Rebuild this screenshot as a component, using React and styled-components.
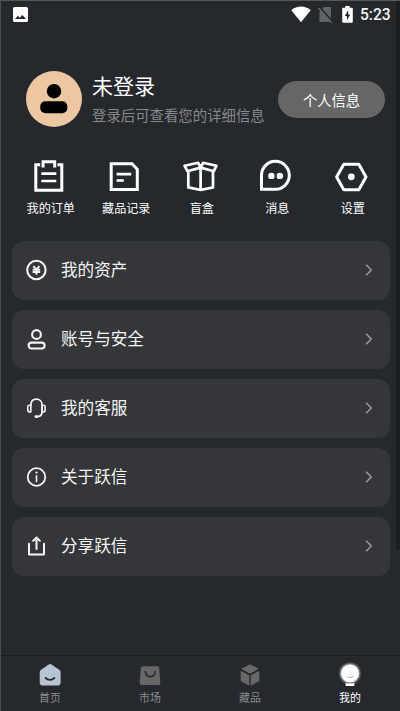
import React from 'react';
import styled, { createGlobalStyle } from 'styled-components';

const GlobalStyle = createGlobalStyle`
    * {
        box-sizing: border-box;
    }
    body {
        margin: 0;
        background: #25282d;
        font-family: Roboto, "Noto Sans CJK SC", sans-serif;
    }
    svg {
        display: block;
        flex: none;
        overflow: visible;
    }
`;

const Screen = styled.div`
    position: relative;
    display: flex;
    flex-direction: column;
    width: 400px;
    height: 711px;
    overflow: hidden;
    background: #25282d;
    border-top: 1px solid #53585c;
    border-left: 1px solid #4a4e52;
`;

const ScrollTrack = styled.div`
    position: absolute;
    top: 0;
    right: 0;
    width: 4px;
    height: 549px;
    background: #1d1e21;
`;

const StatusBar = styled.header`
    display: flex;
    align-items: center;
    height: 27px;
    padding: 0 9px 0 12px;
`;

const StatusIcons = styled.div`
    display: flex;
    align-items: center;
    margin-left: auto;
`;

const WifiIcon = styled.svg`
    width: 20px;
    height: 17px;
`;

const SimIcon = styled.svg`
    width: 15px;
    height: 17px;
    margin-left: 7px;
`;

const BatteryIcon = styled.svg`
    width: 11px;
    height: 17px;
    margin-left: 9px;
`;

const Clock = styled.span`
    width: 31px;
    margin-left: 7px;
    color: #f4f4f4;
    font-size: 15.6px;
    font-weight: 500;
    line-height: 20px;
    white-space: nowrap;
`;

const Profile = styled.section`
    display: flex;
    align-items: center;
    height: 56px;
    margin-top: 43px;
    padding: 0 15px 0 25px;
`;

const Avatar = styled.div`
    width: 56px;
    height: 56px;
    border-radius: 50%;
    background: #edc7a1;
`;

const ProfileText = styled.div`
    flex: 1;
    margin-left: 10px;
    white-space: nowrap;
`;

const UserName = styled.div`
    color: #fff;
    font-size: 21px;
    line-height: 30px;
`;

const UserHint = styled.div`
    color: #86888a;
    font-size: 14.4px;
    line-height: 20px;
    padding-top: 5px;
`;

const InfoButton = styled.button`
    width: 107px;
    height: 37px;
    padding: 0;
    border: 0;
    border-radius: 19px;
    background: #666;
    color: #fff;
    font-family: inherit;
    font-size: 14.3px;
`;

const Shortcuts = styled.nav`
    display: grid;
    grid-template-columns: repeat(5, 75.5px);
    margin-top: 31px;
    padding-left: 12px;
`;

const Shortcut = styled.div`
    display: flex;
    flex-direction: column;
    align-items: center;
    color: #fff;
    font-size: 12.1px;
    line-height: 18px;
    gap: 6px;
`;

const Menu = styled.main`
    display: flex;
    flex-direction: column;
    gap: 10px;
    margin-top: 23px;
    padding: 0 10px 0 11px;
`;

const MenuRow = styled.div`
    display: flex;
    align-items: center;
    height: 59px;
    padding: 0 16px 0 12px;
    border-radius: 12px;
    background: #35363a;
    color: #f6f6f6;
`;

const MenuLabel = styled.span`
    flex: 1;
    margin-left: 12px;
    padding-top: 1px;
    font-size: 16.6px;
    line-height: 24px;
`;

const Chevron = styled.svg`
    width: 10px;
    height: 12px;
    margin-bottom: 2px;
`;

const TabBar = styled.footer`
    display: grid;
    grid-template-columns: repeat(4, 100px);
    height: 56px;
    margin-top: auto;
    margin-left: -1px;
    padding-top: 5px;
    border-top: 1px solid #1b1d21;
`;

const Tab = styled.div`
    display: flex;
    flex-direction: column;
    align-items: center;
    color: ${(props) => (props.$active ? '#fff' : '#8b8c8e')};
    font-size: 10.9px;
    line-height: 16px;
    gap: 2px;
`;

const BigIcon = ({ children }) => (
    <svg width="36" height="36" viewBox="0 0 36 36" fill="none" stroke="#fff" strokeWidth="3">
        {children}
    </svg>
);

const RowIcon = ({ children }) => (
    <svg width="25" height="25" viewBox="0 0 25 25" fill="none" stroke="#f4f4f4" strokeWidth="1.8" strokeLinecap="round" strokeLinejoin="round">
        {children}
    </svg>
);

const TabIcon = ({ children }) => (
    <svg width="30" height="28" viewBox="0 0 30 28" fill="none">
        {children}
    </svg>
);

const shortcuts = [
    {
        label: '我的订单',
        icon: (
            <BigIcon>
                <path d="M7.2 6.7H2.8v25.5h26V6.7h-4.4" />
                <path d="M10.1 9.6V3.8h11.6v5.8" />
                <path d="M8.3 15.7h15M8.3 23h15" strokeWidth="2.7" />
            </BigIcon>
        ),
    },
    {
        label: '藏品记录',
        icon: (
            <BigIcon>
                <path d="M3.2 5.7H24l5.3 5.6v20.2H3.2z" />
                <path d="M8.6 16.2h14.6M8.6 22.5h7.2" strokeWidth="2.7" />
            </BigIcon>
        ),
    },
    {
        label: '盲盒',
        icon: (
            <BigIcon>
                <g strokeWidth="2.7" strokeLinejoin="round">
                    <path d="M4.3 13V29.4L16.6 32 29 29.4V13M16.6 10.4V31.5" />
                    <path d="M.6 7.8 14.2 4.8 16.6 9.6 3.4 13.2zM32.4 7.8 19 4.8 16.6 9.6 29.8 13.2z" />
                </g>
            </BigIcon>
        ),
    },
    {
        label: '消息',
        icon: (
            <BigIcon>
                <path d="M2.5 31.3V17.2A13.9 14 0 1 1 16.4 31.3z" />
                <circle cx="12.4" cy="17.9" r="3.2" fill="#fff" stroke="none" />
                <circle cx="20.8" cy="17.9" r="3.2" fill="#fff" stroke="none" />
            </BigIcon>
        ),
    },
    {
        label: '设置',
        icon: (
            <BigIcon>
                <path d="M8.8 6.3H23.8L31 19 23.8 31.7H8.8L1.6 19z" strokeLinejoin="round" />
                <circle cx="16.3" cy="18.8" r="3.4" fill="#fff" stroke="none" />
            </BigIcon>
        ),
    },
];

const menu = [
    {
        label: '我的资产',
        icon: (
            <RowIcon>
                <circle cx="12.4" cy="12" r="9.2" strokeWidth="2.1" />
                <path d="M9.3 8.1 12.4 11.4 15.5 8.1M8.6 11.7h7.6M8.6 14h7.6M12.4 11.4v5.4" strokeWidth="2" strokeLinecap="butt" />
            </RowIcon>
        ),
    },
    {
        label: '账号与安全',
        icon: (
            <RowIcon>
                <circle cx="12.5" cy="7.5" r="4.4" strokeWidth="2.1" />
                <rect x="4.6" y="15.6" width="16" height="5.9" rx="2.9" strokeWidth="2.1" />
            </RowIcon>
        ),
    },
    {
        label: '我的客服',
        icon: (
            <RowIcon>
                <path d="M6.9 9.2C6.9 5.4 9.2 3.2 12.4 3.2s5.7 2.2 5.7 6v6.5c0 3-1.9 4.7-4.7 4.9" />
                <path d="M6.8 9.3v6.6H5.4a1.6 1.6 0 0 1-1.6-1.6v-3.4a1.6 1.6 0 0 1 1.6-1.6zM18.1 9.3v6.6h1.4a1.6 1.6 0 0 0 1.6-1.6v-3.4a1.6 1.6 0 0 0-1.6-1.6z" strokeWidth="1.6" />
                <path d="M11.8 20.6h1.4" strokeWidth="2.6" />
            </RowIcon>
        ),
    },
    {
        label: '关于跃信',
        icon: (
            <RowIcon>
                <circle cx="12.5" cy="12" r="8.8" strokeWidth="1.8" />
                <path d="M12.5 10.8v5.8" strokeWidth="1.6" />
                <circle cx="12.5" cy="7.6" r="1.1" fill="#f4f4f4" stroke="none" />
            </RowIcon>
        ),
    },
    {
        label: '分享跃信',
        icon: (
            <RowIcon>
                <path d="M5 9.8v10.6h15V9.8M12.5 15V3.9M9.1 6.9 12.5 3.5l3.4 3.4" strokeWidth="2" />
            </RowIcon>
        ),
    },
];

const tabs = [
    {
        label: '首页',
        icon: (
            <TabIcon>
                <path d="M13.7 3.5a2.6 2.6 0 0 1 2.8 0l7.7 5.3a3 3 0 0 1 1.4 2.4V21.5a3 3 0 0 1-3 3H7.7a3 3 0 0 1-3-3V11.2a3 3 0 0 1 1.4-2.4z" fill="#b8c4d1" />
                <path d="M10.5 16.9c2.4 2.7 6.6 2.7 9 0" stroke="#25282d" strokeWidth="1.7" strokeLinecap="round" />
            </TabIcon>
        ),
    },
    {
        label: '市场',
        icon: (
            <TabIcon>
                <path d="M7.8 5.3h14.4a2 2 0 0 1 2 1.8l1.1 14.6a2 2 0 0 1-2 2.2H6.7a2 2 0 0 1-2-2.2L5.8 7.1a2 2 0 0 1 2-1.8z" fill="#676767" />
                <path d="M10.4 10.5c.3 6.8 9.3 6.8 9.6 0" stroke="#25282d" strokeWidth="1.6" strokeLinecap="round" />
            </TabIcon>
        ),
    },
    {
        label: '藏品',
        icon: (
            <TabIcon>
                <g fill="#686868" stroke="#686868" strokeWidth="1.2" strokeLinejoin="round">
                    <path d="M15 4 22.7 7.8 15 11.9 7.3 7.8z" />
                    <path d="M6.3 10.7 13.7 14.7V23.7L6.3 19.7z" />
                    <path d="M23.7 10.7 16.3 14.7V23.7L23.7 19.7z" />
                </g>
            </TabIcon>
        ),
    },
    {
        label: '我的',
        active: true,
        icon: (
            <TabIcon>
                <defs>
                    <filter id="glow" x="-30%" y="-30%" width="160%" height="160%">
                        <feGaussianBlur stdDeviation="1.2" />
                    </filter>
                </defs>
                <circle cx="15" cy="12.4" r="10" fill="#fff" opacity=".7" filter="url(#glow)" />
                <circle cx="15" cy="12.4" r="8.9" fill="#fff" />
                <path d="M10.3 21.9h9.4l-.6 3.1h-8.2z" fill="#fff" />
                <path d="M10.4 22h9.2" stroke="#777" strokeWidth=".7" />
                <path d="M11.9 15.3c1.9 1.7 4.4 1.7 6.3 0" stroke="#aaa" strokeWidth="1" strokeLinecap="round" />
            </TabIcon>
        ),
    },
];

const App = () => {
    return (
        <>
            <GlobalStyle />
            <Screen>
                <ScrollTrack />
                <StatusBar>
                    <svg width="15" height="15" viewBox="0 0 15 15">
                        <rect width="15" height="15" rx="1.5" fill="#fff" />
                        <path d="M2 12 4.9 8.7l1.9 2L9.3 7.9 13 12z" fill="#25282d" />
                    </svg>
                    <StatusIcons>
                        <WifiIcon viewBox="0 0 20 17">
                            <path d="M.3 4.2C6-.6 14-.6 19.7 4.2L10 16.3z" fill="#fff" />
                        </WifiIcon>
                        <SimIcon viewBox="0 0 15 17">
                            <path d="M6 1h7v15H1.5V5.3z" fill="#626467" />
                            <path d="M1.2 1.4 14.7 16.8" stroke="#25282d" strokeWidth="3" />
                            <path d="M.5 1.8 13.5 16.6" stroke="#75777a" strokeWidth="1.2" />
                        </SimIcon>
                        <BatteryIcon viewBox="0 0 11 17">
                            <path d="M3.3 0h4.4v1.7h2.1a1 1 0 0 1 1 1v13a1 1 0 0 1-1 1H1.2a1 1 0 0 1-1-1v-13a1 1 0 0 1 1-1h2.1z" fill="#fff" />
                            <path d="M6.2 4.2 2.8 10h2.1v4.2L8.3 8.4H6.2z" fill="#25282d" />
                        </BatteryIcon>
                        <Clock>5:23</Clock>
                    </StatusIcons>
                </StatusBar>

                <Profile>
                    <Avatar>
                        <svg width="56" height="56" viewBox="0 0 56 56">
                            <circle cx="28" cy="20.2" r="7.2" />
                            <rect x="14.3" y="30.3" width="27" height="12" rx="5" />
                        </svg>
                    </Avatar>
                    <ProfileText>
                        <UserName>未登录</UserName>
                        <UserHint>登录后可查看您的详细信息</UserHint>
                    </ProfileText>
                    <InfoButton>个人信息</InfoButton>
                </Profile>

                <Shortcuts>
                    {shortcuts.map((item) => (
                        <Shortcut key={item.label}>
                            {item.icon}
                            {item.label}
                        </Shortcut>
                    ))}
                </Shortcuts>

                <Menu>
                    {menu.map((item) => (
                        <MenuRow key={item.label}>
                            {item.icon}
                            <MenuLabel>{item.label}</MenuLabel>
                            <Chevron viewBox="0 0 10 12" fill="none" stroke="#98999b" strokeWidth="1.6">
                                <path d="M2.2.8 7.2 6l-5 5.2" />
                            </Chevron>
                        </MenuRow>
                    ))}
                </Menu>

                <TabBar>
                    {tabs.map((tab) => (
                        <Tab key={tab.label} $active={tab.active}>
                            {tab.icon}
                            {tab.label}
                        </Tab>
                    ))}
                </TabBar>
            </Screen>
        </>
    );
}

export default App;
